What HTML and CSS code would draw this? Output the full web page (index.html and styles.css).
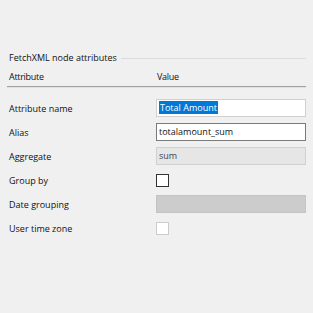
FILE: index.html
```html
<!DOCTYPE html>
<html lang="en">
<head>
    <meta charset="UTF-8">
    <title>FetchXML node attributes</title>
    <link rel="stylesheet" href="styles.css">
</head>
<body>
    <div class="panel">
        <div class="group-title">
            <span>FetchXML node attributes</span>
            <div class="group-line"></div>
        </div>

        <div class="grid-header">
            <div class="hcell">Attribute</div>
            <div class="hcell">Value</div>
        </div>

        <div class="rows">
            <div class="row">
                <div class="label">Attribute name</div>
                <div class="box box-light"><span class="selected">Total Amount</span></div>
            </div>
            <div class="row">
                <div class="label">Alias</div>
                <div class="box box-dark">totalamount_sum</div>
            </div>
            <div class="row">
                <div class="label">Aggregate</div>
                <div class="box box-combo">sum</div>
            </div>
            <div class="row">
                <div class="label">Group by</div>
                <div class="check"></div>
            </div>
            <div class="row">
                <div class="label">Date grouping</div>
                <div class="box box-disabled"></div>
            </div>
            <div class="row">
                <div class="label">User time zone</div>
                <div class="check check-disabled"></div>
            </div>
        </div>
    </div>
</body>
</html>
```

FILE: styles.css
```css
body {
    margin: 0;
    background: #f0f0f0;
    font-family: "Open Sans", "Noto Sans", sans-serif;
    font-size: 9px;
    color: #111111;
    width: 313px;
    height: 313px;
}
.panel {
    padding: 51px 7px 0 7px;
}
.group-title {
    display: flex;
    align-items: center;
    gap: 4px;
    height: 14px;
    line-height: 14px;
    padding-left: 2px;
}
.group-line {
    flex: 1;
    height: 1px;
    background: #dcdcdc;
    margin-top: 1px;
}
.grid-header {
    display: grid;
    grid-template-columns: 149px 1fr;
    margin-top: 2px;
    height: 19px;
    border-bottom: 1px solid #a0a0a0;
    box-shadow: 0 1px 0 #e2e2e2;
}
.hcell {
    line-height: 19px;
    padding-left: 2px;
    letter-spacing: -0.3px;
}
.hcell + .hcell {
    padding-left: 1px;
}
.rows {
    margin-top: 12px;
    display: flex;
    flex-direction: column;
    gap: 6px;
}
.row {
    display: grid;
    grid-template-columns: 149px 1fr;
    align-items: center;
    height: 18px;
}
.label {
    padding-left: 2px;
}
.box {
    height: 18px;
    box-sizing: border-box;
    line-height: 16px;
    padding-left: 2px;
    background: #ffffff;
}
.box-light {
    border: 1px solid #d0d0d0;
}
.box-dark {
    border: 1px solid #7a7a7a;
}
.box-combo {
    background: #e6e6e6;
    border: 1px solid #d0d0d0;
    color: #444444;
}
.box-disabled {
    background: #cccccc;
    border: 1px solid #c4c4c4;
}
.selected {
    background: #0078d7;
    color: #ffffff;
    padding: 0 1px;
}
.check {
    width: 13px;
    height: 13px;
    box-sizing: border-box;
    border: 1px solid #333333;
    background: #ffffff;
}
.check-disabled {
    border-color: #cccccc;
}
```
